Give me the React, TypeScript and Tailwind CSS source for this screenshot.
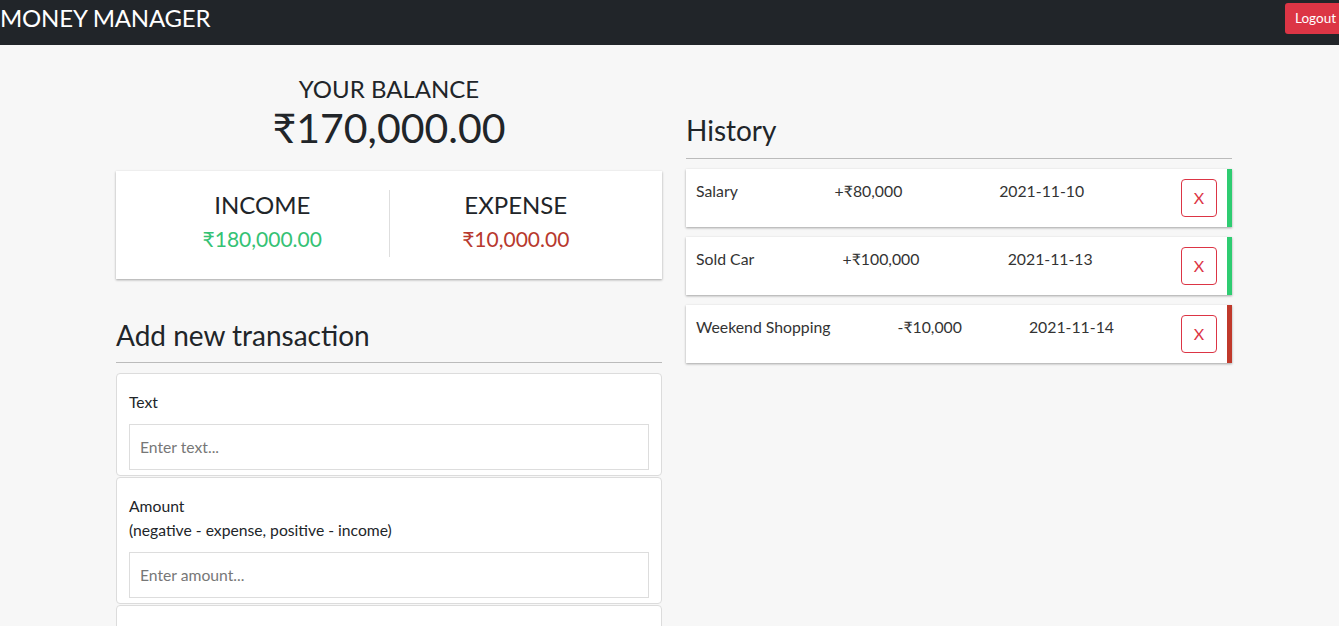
import React from "react";

const transactions = [
  { id: 1, text: "Salary", amount: "+₹80,000", date: "2021-11-10", income: true },
  { id: 2, text: "Sold Car", amount: "+₹100,000", date: "2021-11-13", income: true },
  { id: 3, text: "Weekend Shopping", amount: "-₹10,000", date: "2021-11-14", income: false },
];

const Navbar = () => {
  return (
    <nav className="h-[45px] bg-[#212529] flex items-start justify-between overflow-hidden">
      <span className="text-white text-[24px] leading-[36px] tracking-[-0.2px]">MONEY MANAGER</span>
      <button className="mt-[3px] mr-[-7px] h-[31px] px-[10px] bg-[#dc3545] text-white text-[13.5px] rounded-[3px]">
        Logout
      </button>
    </nav>
  );
};

const Balance = () => {
  return (
    <div className="flex flex-col items-center text-[#212529] pt-[29px]">
      <h4 className="text-[24px] leading-[29px] uppercase">Your Balance</h4>
      <h1 className="text-[41px] leading-[50px]">₹170,000.00</h1>
    </div>
  );
};

const IncomeExpense = () => {
  return (
    <div className="mt-[18px] bg-white pt-[19px] pb-[22px] px-[20px] flex shadow-[0_1px_3px_rgba(0,0,0,0.12),0_1px_2px_rgba(0,0,0,0.24)]">
      <div className="flex-1 flex flex-col items-center">
        <h4 className="text-[24px] leading-[29px] text-[#212529] uppercase">Income</h4>
        <p className="mt-[2px] text-[21px] leading-[36px] text-[#35c274]">₹180,000.00</p>
      </div>
      <div className="flex-1 flex flex-col items-center border-l border-[#dedede]">
        <h4 className="text-[24px] leading-[29px] text-[#212529] uppercase">Expense</h4>
        <p className="mt-[2px] text-[21px] leading-[36px] text-[#b8392e]">₹10,000.00</p>
      </div>
    </div>
  );
};

const History = () => {
  return (
    <div className="pt-[68px]">
      <h3 className="text-[28px] leading-[34px] text-[#212529] pb-[11px] border-b border-[#bbb]">History</h3>
      <ul className="mt-[10px] flex flex-col gap-[10px]">
        {transactions.map((t) => (
          <li
            key={t.id}
            className={`bg-white p-[10px] flex justify-between items-start text-[15.8px] leading-[24px] text-[#333] border-r-[5px] shadow-[0_1px_3px_rgba(0,0,0,0.12),0_1px_2px_rgba(0,0,0,0.24)] ${
              t.income ? "border-[#2ecc71]" : "border-[#c0392b]"
            }`}
          >
            <span>{t.text}</span>
            <span>{t.amount}</span>
            <span>{t.date}</span>
            <button className="w-[36px] h-[38px] border border-[#dc3545] text-[#dc3545] rounded-[4px] text-[16px]">
              X
            </button>
          </li>
        ))}
      </ul>
    </div>
  );
};

const AddTransaction = () => {
  return (
    <div className="mt-[39px]">
      <h3 className="text-[28px] leading-[34px] text-[#212529] pb-[10px] border-b border-[#bbb]">
        Add new transaction
      </h3>
      <form className="mt-[10px] flex flex-col gap-px">
        <div className="bg-white border border-[#dcdcdc] rounded-[4px] px-[12px] pt-[16px] pb-[5px]">
          <label className="block text-[15.7px] leading-[24px] text-[#212529] mb-[10px]">Text</label>
          <input
            type="text"
            placeholder="Enter text..."
            className="w-full h-[46px] border border-[#ddd] px-[10px] text-[15.7px] placeholder:text-[#777] outline-none"
          />
        </div>
        <div className="bg-white border border-[#dcdcdc] rounded-[4px] px-[12px] pt-[16px] pb-[5px]">
          <label className="block text-[15.7px] leading-[24px] text-[#212529] mb-[10px]">
            Amount
            <br />
            (negative - expense, positive - income)
          </label>
          <input
            type="number"
            placeholder="Enter amount..."
            className="w-full h-[46px] border border-[#ddd] px-[10px] text-[15.7px] placeholder:text-[#777] outline-none"
          />
        </div>
        <div className="bg-white border border-[#dcdcdc] rounded-[4px] h-[60px]" />
      </form>
    </div>
  );
};

export default function App() {
  return (
    <div className="min-h-screen bg-[#f7f7f7] font-['Lato',sans-serif] overflow-hidden">
      <Navbar />
      <main className="pl-[116px] flex gap-[24px]">
        <div className="w-[546px]">
          <Balance />
          <IncomeExpense />
          <AddTransaction />
        </div>
        <div className="w-[546px]">
          <History />
        </div>
      </main>
    </div>
  );
}
